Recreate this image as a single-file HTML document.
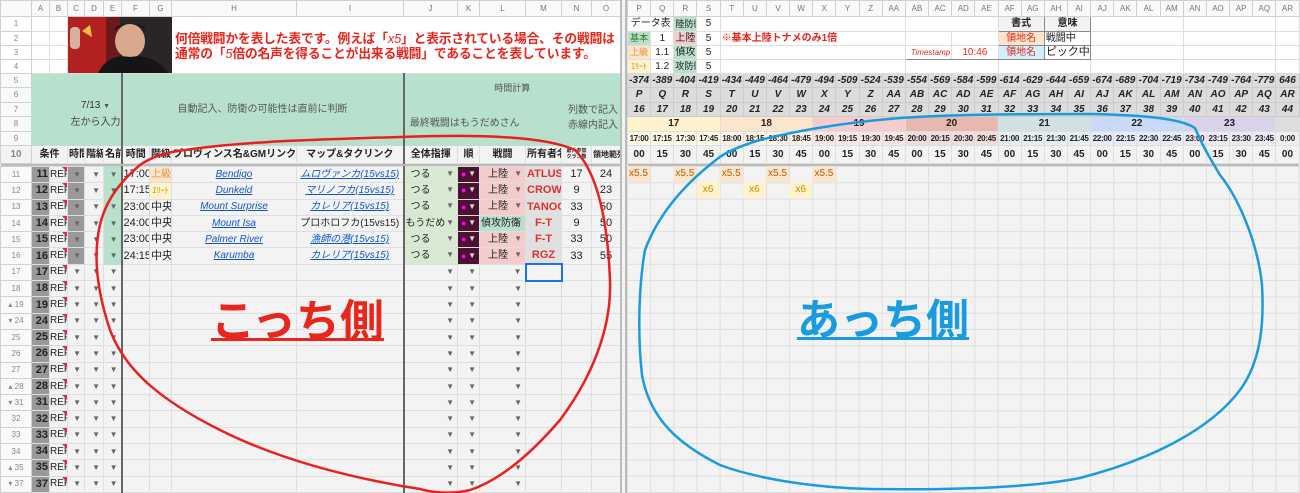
<!DOCTYPE html>
<html><head><meta charset="utf-8">
<style>
*{box-sizing:border-box;margin:0;padding:0}
body{width:1300px;height:493px;overflow:hidden;background:#f3f3f3;position:relative;font-family:"Liberation Sans","Noto Sans CJK JP",sans-serif;}
table{border-collapse:collapse;table-layout:fixed;position:absolute;top:0}
td{border:1px solid #dedede;font-size:10px;white-space:nowrap;overflow:hidden;text-align:center;padding:0 1px;line-height:1;color:#222}
.h td{background:#f8f9fa;color:#777;font-size:8px;border-color:#d0d0d0}
td.rh{background:#f8f9fa;color:#888;font-size:8px;border-color:#d0d0d0}
.w td{background:#fff}
.g{background:#b7e1cd!important;border-color:#b7e1cd}
.dk{background:#999!important;font-weight:bold;font-size:11px;text-align:right}
.ref{font-size:10px;text-align:left;position:relative;padding:0}
.ref:after{content:"";position:absolute;right:0;top:0;border-top:5px solid #e24;border-left:5px solid transparent}
.ar{color:#666;font-size:8px;text-align:right;padding-right:3px}
.tl{border-left:2px solid #666!important}
.lk{color:#1155cc;text-decoration:underline;font-style:italic;font-size:10px}
.j{background:#d9ead3!important;text-align:left;padding-left:6px;position:relative}
.j b,.l b{position:absolute;right:3px;color:#666;font-size:8px;font-weight:normal}
.k{background:#4c1130!important;text-align:left;color:#f0f;position:relative;font-size:9px;padding-left:3px}
.k b{position:absolute;right:3px;color:#ddd;font-size:8px;font-weight:normal}
.l{background:#f4cccc!important;position:relative;text-align:left;padding-left:8px}
.m{background:#e0e0e0!important;color:#e03030;font-weight:bold;font-size:11px}
.ro{border-left:1px solid #e87070!important}
.gr td{background:#dcdcdc;font-weight:bold;font-style:italic;font-size:10px;border-color:#ccc}
.hd td{background:#f3f3f3;font-weight:bold;font-size:10px}
.tm td{font-size:8px;font-weight:bold;letter-spacing:-0.3px;padding:0}
</style></head><body>

<table style="left:0;width:620px">
<colgroup><col style="width:31px"><col style="width:18px"><col style="width:18px"><col style="width:17px"><col style="width:19px"><col style="width:18px"><col style="width:28px"><col style="width:22px"><col style="width:125px"><col style="width:107px"><col style="width:54px"><col style="width:22px"><col style="width:46px"><col style="width:36px"><col style="width:30px"><col style="width:29px"></colgroup>
<tr class="h" style="height:16px"><td></td><td>A</td><td>B</td><td>C</td><td>D</td><td>E</td><td>F</td><td>G</td><td>H</td><td>I</td><td>J</td><td>K</td><td>L</td><td>M</td><td>N</td><td>O</td></tr>
<tr class="w" style="height:15px"><td class="rh">1</td><td></td><td></td><td colspan="5" rowspan="4" style="background:#222;padding:0"></td><td colspan="8" rowspan="4"></td></tr>
<tr class="w" style="height:14px"><td class="rh">2</td><td></td><td></td></tr>
<tr class="w" style="height:14px"><td class="rh">3</td><td></td><td></td></tr>
<tr class="w" style="height:14px"><td class="rh">4</td><td></td><td></td></tr>
<tr style="height:14px"><td class="rh">5</td><td class="g" colspan="2" rowspan="5"></td><td class="g" colspan="3" rowspan="5" style="position:relative"><div style="position:absolute;top:27px;left:0;width:55px;text-align:center;font-size:10px;color:#333">7/13 <span style="font-size:7px;color:#555">&#9660;</span></div><div style="position:absolute;top:44px;left:0;width:55px;text-align:center;font-size:10px;color:#444">左から入力</div></td><td class="g tl" colspan="4" rowspan="5" style="color:#555;font-size:10px">自動記入、防衛の可能性は直前に判断</td><td class="g tl" colspan="6" rowspan="2" style="color:#555;font-size:9px">時間計算</td></tr>
<tr style="height:15px"><td class="rh">6</td></tr>
<tr style="height:14px"><td class="rh">7</td><td class="g" colspan="3" rowspan="3" style="color:#555;font-size:10px;border-left:2px solid #666">最終戦闘はもうだめさん</td><td class="g" colspan="3" rowspan="3" style="position:relative;color:#555"><div style="position:absolute;top:3px;right:2px;font-size:10px">列数で記入</div><div style="position:absolute;top:18px;right:2px;font-size:10px">赤線内記入</div></td></tr>
<tr style="height:15px"><td class="rh">8</td></tr>
<tr style="height:14px"><td class="rh">9</td></tr>
<tr class="hd" style="height:18px"><td class="rh">10</td><td colspan="2" style="font-size:10px">条件</td><td>時間</td><td>階級</td><td>名前</td><td class="tl">時間</td><td>階級</td><td>プロヴィンス名&amp;GMリンク</td><td>マップ&amp;タクリンク</td><td class="tl">全体指揮</td><td>順</td><td>戦闘</td><td>所有者名</td><td style="font-size:5px;line-height:1.1">最大参加<br>クラン数</td><td style="font-size:8px">領地範列</td></tr>
<tr style="height:3px"><td colspan="16" style="background:#bbb;border:none;padding:0"></td></tr>
</table>

<div style="position:absolute;left:0;top:166px;width:620px">
<table style="position:static;width:620px">
<colgroup><col style="width:31px"><col style="width:18px"><col style="width:18px"><col style="width:17px"><col style="width:19px"><col style="width:18px"><col style="width:28px"><col style="width:22px"><col style="width:125px"><col style="width:107px"><col style="width:54px"><col style="width:22px"><col style="width:46px"><col style="width:36px"><col style="width:30px"><col style="width:29px"></colgroup>
<tr style="height:16.3px"><td class="rh">11</td><td class="dk">11</td><td class="ref">REF</td><td class="ar" style="background:#999">&#9660;</td><td class="ar">&#9660;</td><td class="ar g">&#9660;</td><td class="tl" style="font-size:11px">17:00</td><td style="background:#fce5cd;color:#e69138">上級</td><td><span class="lk">Bendigo</span></td><td><span class="lk">ムロヴァンカ(15vs15)</span></td><td class="j tl">つる<b>&#9660;</b></td><td class="k">●<b>&#9660;</b></td><td class="l">上陸<b>&#9660;</b></td><td class="m">ATLUS</td><td style="font-size:11px">17</td><td class="ro" style="font-size:11px">24</td></tr>
<tr style="height:16.3px"><td class="rh">12</td><td class="dk">12</td><td class="ref">REF</td><td class="ar" style="background:#999">&#9660;</td><td class="ar">&#9660;</td><td class="ar g">&#9660;</td><td class="tl" style="font-size:11px">17:15</td><td style="background:#fff2cc;color:#bf9000;font-size:8px">ｴﾘｰﾄ</td><td><span class="lk">Dunkeld</span></td><td><span class="lk">マリノフカ(15vs15)</span></td><td class="j tl">つる<b>&#9660;</b></td><td class="k">●<b>&#9660;</b></td><td class="l">上陸<b>&#9660;</b></td><td class="m">CROWN</td><td style="font-size:11px">9</td><td class="ro" style="font-size:11px">23</td></tr>
<tr style="height:16.3px"><td class="rh">13</td><td class="dk">13</td><td class="ref">REF</td><td class="ar" style="background:#999">&#9660;</td><td class="ar">&#9660;</td><td class="ar g">&#9660;</td><td class="tl" style="font-size:11px">23:00</td><td style="font-size:11px">中央</td><td><span class="lk">Mount Surprise</span></td><td><span class="lk">カレリア(15vs15)</span></td><td class="j tl">つる<b>&#9660;</b></td><td class="k">●<b>&#9660;</b></td><td class="l">上陸<b>&#9660;</b></td><td class="m">TANOC</td><td style="font-size:11px">33</td><td class="ro" style="font-size:11px">50</td></tr>
<tr style="height:16.3px"><td class="rh">14</td><td class="dk">14</td><td class="ref">REF</td><td class="ar" style="background:#999">&#9660;</td><td class="ar">&#9660;</td><td class="ar g">&#9660;</td><td class="tl" style="font-size:11px">24:00</td><td style="font-size:11px">中央</td><td><span class="lk">Mount Isa</span></td><td style="font-size:10px">プロホロフカ(15vs15)</td><td class="j tl" style="padding-left:1px">もうだめ<b>&#9660;</b></td><td class="k">●<b>&#9660;</b></td><td class="l" style="background:#b7e1cd!important;padding-left:1px">偵攻防衛<b>&#9660;</b></td><td class="m">F-T</td><td style="font-size:11px">9</td><td class="ro" style="font-size:11px">50</td></tr>
<tr style="height:16.3px"><td class="rh">15</td><td class="dk">15</td><td class="ref">REF</td><td class="ar" style="background:#999">&#9660;</td><td class="ar">&#9660;</td><td class="ar g">&#9660;</td><td class="tl" style="font-size:11px">23:00</td><td style="font-size:11px">中央</td><td><span class="lk">Palmer River</span></td><td><span class="lk">漁師の港(15vs15)</span></td><td class="j tl">つる<b>&#9660;</b></td><td class="k">●<b>&#9660;</b></td><td class="l">上陸<b>&#9660;</b></td><td class="m">F-T</td><td style="font-size:11px">33</td><td class="ro" style="font-size:11px">50</td></tr>
<tr style="height:16.3px"><td class="rh">16</td><td class="dk">16</td><td class="ref">REF</td><td class="ar" style="background:#999">&#9660;</td><td class="ar">&#9660;</td><td class="ar g">&#9660;</td><td class="tl" style="font-size:11px">24:15</td><td style="font-size:11px">中央</td><td><span class="lk">Karumba</span></td><td><span class="lk">カレリア(15vs15)</span></td><td class="j tl">つる<b>&#9660;</b></td><td class="k">●<b>&#9660;</b></td><td class="l">上陸<b>&#9660;</b></td><td class="m">RGZ</td><td style="font-size:11px">33</td><td class="ro" style="font-size:11px">55</td></tr>
<tr style="height:16.3px"><td class="rh">17</td><td class="dk">17</td><td class="ref">REF</td><td class="ar">&#9660;</td><td class="ar">&#9660;</td><td class="ar">&#9660;</td><td class="tl"></td><td></td><td></td><td></td><td class="ar tl">&#9660;</td><td class="ar">&#9660;</td><td class="ar">&#9660;</td><td style="border:2px solid #1a73e8"></td><td></td><td class="ro"></td></tr>
<tr style="height:16.3px"><td class="rh">18</td><td class="dk">18</td><td class="ref">REF</td><td class="ar">&#9660;</td><td class="ar">&#9660;</td><td class="ar">&#9660;</td><td class="tl"></td><td></td><td></td><td></td><td class="ar tl">&#9660;</td><td class="ar">&#9660;</td><td class="ar">&#9660;</td><td></td><td></td><td class="ro"></td></tr>
<tr style="height:16.3px"><td class="rh">&#9652; 19</td><td class="dk">19</td><td class="ref">REF</td><td class="ar">&#9660;</td><td class="ar">&#9660;</td><td class="ar">&#9660;</td><td class="tl"></td><td></td><td></td><td></td><td class="ar tl">&#9660;</td><td class="ar">&#9660;</td><td class="ar">&#9660;</td><td></td><td></td><td class="ro"></td></tr>
<tr style="height:16.3px"><td class="rh">&#9662; 24</td><td class="dk">24</td><td class="ref">REF</td><td class="ar">&#9660;</td><td class="ar">&#9660;</td><td class="ar">&#9660;</td><td class="tl"></td><td></td><td></td><td></td><td class="ar tl">&#9660;</td><td class="ar">&#9660;</td><td class="ar">&#9660;</td><td></td><td></td><td class="ro"></td></tr>
<tr style="height:16.3px"><td class="rh">25</td><td class="dk">25</td><td class="ref">REF</td><td class="ar">&#9660;</td><td class="ar">&#9660;</td><td class="ar">&#9660;</td><td class="tl"></td><td></td><td></td><td></td><td class="ar tl">&#9660;</td><td class="ar">&#9660;</td><td class="ar">&#9660;</td><td></td><td></td><td class="ro"></td></tr>
<tr style="height:16.3px"><td class="rh">26</td><td class="dk">26</td><td class="ref">REF</td><td class="ar">&#9660;</td><td class="ar">&#9660;</td><td class="ar">&#9660;</td><td class="tl"></td><td></td><td></td><td></td><td class="ar tl">&#9660;</td><td class="ar">&#9660;</td><td class="ar">&#9660;</td><td></td><td></td><td class="ro"></td></tr>
<tr style="height:16.3px"><td class="rh">27</td><td class="dk">27</td><td class="ref">REF</td><td class="ar">&#9660;</td><td class="ar">&#9660;</td><td class="ar">&#9660;</td><td class="tl"></td><td></td><td></td><td></td><td class="ar tl">&#9660;</td><td class="ar">&#9660;</td><td class="ar">&#9660;</td><td></td><td></td><td class="ro"></td></tr>
<tr style="height:16.3px"><td class="rh">&#9652; 28</td><td class="dk">28</td><td class="ref">REF</td><td class="ar">&#9660;</td><td class="ar">&#9660;</td><td class="ar">&#9660;</td><td class="tl"></td><td></td><td></td><td></td><td class="ar tl">&#9660;</td><td class="ar">&#9660;</td><td class="ar">&#9660;</td><td></td><td></td><td class="ro"></td></tr>
<tr style="height:16.3px"><td class="rh">&#9662; 31</td><td class="dk">31</td><td class="ref">REF</td><td class="ar">&#9660;</td><td class="ar">&#9660;</td><td class="ar">&#9660;</td><td class="tl"></td><td></td><td></td><td></td><td class="ar tl">&#9660;</td><td class="ar">&#9660;</td><td class="ar">&#9660;</td><td></td><td></td><td class="ro"></td></tr>
<tr style="height:16.3px"><td class="rh">32</td><td class="dk">32</td><td class="ref">REF</td><td class="ar">&#9660;</td><td class="ar">&#9660;</td><td class="ar">&#9660;</td><td class="tl"></td><td></td><td></td><td></td><td class="ar tl">&#9660;</td><td class="ar">&#9660;</td><td class="ar">&#9660;</td><td></td><td></td><td class="ro"></td></tr>
<tr style="height:16.3px"><td class="rh">33</td><td class="dk">33</td><td class="ref">REF</td><td class="ar">&#9660;</td><td class="ar">&#9660;</td><td class="ar">&#9660;</td><td class="tl"></td><td></td><td></td><td></td><td class="ar tl">&#9660;</td><td class="ar">&#9660;</td><td class="ar">&#9660;</td><td></td><td></td><td class="ro"></td></tr>
<tr style="height:16.3px"><td class="rh">34</td><td class="dk">34</td><td class="ref">REF</td><td class="ar">&#9660;</td><td class="ar">&#9660;</td><td class="ar">&#9660;</td><td class="tl"></td><td></td><td></td><td></td><td class="ar tl">&#9660;</td><td class="ar">&#9660;</td><td class="ar">&#9660;</td><td></td><td></td><td class="ro"></td></tr>
<tr style="height:16.3px"><td class="rh">&#9652; 35</td><td class="dk">35</td><td class="ref">REF</td><td class="ar">&#9660;</td><td class="ar">&#9660;</td><td class="ar">&#9660;</td><td class="tl"></td><td></td><td></td><td></td><td class="ar tl">&#9660;</td><td class="ar">&#9660;</td><td class="ar">&#9660;</td><td></td><td></td><td class="ro"></td></tr>
<tr style="height:16.3px"><td class="rh">&#9662; 37</td><td class="dk">37</td><td class="ref">REF</td><td class="ar">&#9660;</td><td class="ar">&#9660;</td><td class="ar">&#9660;</td><td class="tl"></td><td></td><td></td><td></td><td class="ar tl">&#9660;</td><td class="ar">&#9660;</td><td class="ar">&#9660;</td><td></td><td></td><td class="ro"></td></tr>
</table></div>

<div style="position:absolute;left:620px;top:0;width:7px;height:493px;background:#f3f3f3;border-left:2px solid #bbb;border-right:2px solid #bbb"></div>

<table style="left:627px;width:672px">
<colgroup><col span="29" style="width:23.17px"></colgroup>
<tr class="h" style="height:16px"><td>P</td><td>Q</td><td>R</td><td>S</td><td>T</td><td>U</td><td>V</td><td>W</td><td>X</td><td>Y</td><td>Z</td><td>AA</td><td>AB</td><td>AC</td><td>AD</td><td>AE</td><td>AF</td><td>AG</td><td>AH</td><td>AI</td><td>AJ</td><td>AK</td><td>AL</td><td>AM</td><td>AN</td><td>AO</td><td>AP</td><td>AQ</td><td>AR</td></tr>
<tr class="w" style="height:15px"><td colspan="2" style="font-size:10px">データ表</td><td style="background:#b7e1cd;font-size:9px">陸防衛</td><td style="font-size:10px">5</td><td colspan="8"></td><td colspan="4"></td><td colspan="2" style="background:#f3f3f3;font-weight:bold;border:1px solid #888">書式</td><td colspan="2" style="background:#f3f3f3;font-weight:bold;border:1px solid #888">意味</td><td colspan="4"></td><td colspan="4"></td><td></td></tr>
<tr class="w" style="height:14px"><td style="background:#b7e1cd;color:#38761d;font-size:9px">基本</td><td style="font-size:10px">1</td><td style="background:#f4cccc">上陸</td><td>5</td><td colspan="8" style="color:#e8261d;font-weight:bold;text-align:left;font-size:10px">※基本上陸トナメのみ1倍</td><td colspan="2" style="border-top:1px solid #888;border-left:1px solid #888"></td><td colspan="2" style="border-top:1px solid #888"></td><td colspan="2" style="background:#fce5cd;color:#e8261d;border:1px solid #888">領地名</td><td colspan="2" style="border:1px solid #888;text-align:left">戦闘中</td><td colspan="4"></td><td colspan="4"></td><td></td></tr>
<tr class="w" style="height:14px"><td style="background:#fce5cd;color:#e69138;font-size:9px">上級</td><td style="font-size:10px">1.1</td><td style="background:#b7e1cd">偵攻</td><td>5</td><td colspan="8"></td><td colspan="2" style="color:#e8261d;font-style:italic;font-size:8px;text-align:right;border-left:1px solid #888;border-bottom:1px solid #888">Timestamp</td><td colspan="2" style="color:#e8261d;font-size:10px;border-bottom:1px solid #888">10:46</td><td colspan="2" style="background:#d0f0fb;color:#e8261d;border:1px solid #888">領地名</td><td colspan="2" style="border:1px solid #888;text-align:left;font-size:11px">ピック中</td><td colspan="4"></td><td colspan="4"></td><td></td></tr>
<tr class="w" style="height:14px"><td style="background:#fff2cc;color:#bf9000;font-size:8px">ｴﾘｰﾄ</td><td style="font-size:10px">1.2</td><td style="background:#b7e1cd;font-size:9px">攻防衛</td><td>5</td><td colspan="8"></td><td colspan="4"></td><td colspan="4"></td><td colspan="4"></td><td colspan="4"></td><td></td></tr>
<tr class="gr" style="height:14px"><td>-374</td><td>-389</td><td>-404</td><td>-419</td><td>-434</td><td>-449</td><td>-464</td><td>-479</td><td>-494</td><td>-509</td><td>-524</td><td>-539</td><td>-554</td><td>-569</td><td>-584</td><td>-599</td><td>-614</td><td>-629</td><td>-644</td><td>-659</td><td>-674</td><td>-689</td><td>-704</td><td>-719</td><td>-734</td><td>-749</td><td>-764</td><td>-779</td><td>646</td></tr>
<tr class="gr" style="height:15px"><td>P</td><td>Q</td><td>R</td><td>S</td><td>T</td><td>U</td><td>V</td><td>W</td><td>X</td><td>Y</td><td>Z</td><td>AA</td><td>AB</td><td>AC</td><td>AD</td><td>AE</td><td>AF</td><td>AG</td><td>AH</td><td>AI</td><td>AJ</td><td>AK</td><td>AL</td><td>AM</td><td>AN</td><td>AO</td><td>AP</td><td>AQ</td><td>AR</td></tr>
<tr class="gr" style="height:14px"><td>16</td><td>17</td><td>18</td><td>19</td><td>20</td><td>21</td><td>22</td><td>23</td><td>24</td><td>25</td><td>26</td><td>27</td><td>28</td><td>29</td><td>30</td><td>31</td><td>32</td><td>33</td><td>34</td><td>35</td><td>36</td><td>37</td><td>38</td><td>39</td><td>40</td><td>41</td><td>42</td><td>43</td><td>44</td></tr>
<tr style="height:15px"><td colspan="4" style="background:#fff2cc;font-weight:bold">17</td><td colspan="4" style="background:#fce5cd;font-weight:bold">18</td><td colspan="4" style="background:#f4cccc;font-weight:bold">19</td><td colspan="4" style="background:#e6b8af;font-weight:bold">20</td><td colspan="4" style="background:#d0e0e3;font-weight:bold">21</td><td colspan="4" style="background:#c9daf8;font-weight:bold">22</td><td colspan="4" style="background:#d9d2e9;font-weight:bold">23</td><td style="background:#ddd"></td></tr>
<tr class="tm" style="height:14px"><td style="background:#fffae6">17:00</td><td style="background:#fffae6">17:15</td><td style="background:#fffae6">17:30</td><td style="background:#fffae6">17:45</td><td style="background:#fef2e6">18:00</td><td style="background:#fef2e6">18:15</td><td style="background:#fef2e6">18:30</td><td style="background:#fef2e6">18:45</td><td style="background:#fae6e6">19:00</td><td style="background:#fae6e6">19:15</td><td style="background:#fae6e6">19:30</td><td style="background:#fae6e6">19:45</td><td style="background:#f0dcd8">20:00</td><td style="background:#f0dcd8">20:15</td><td style="background:#f0dcd8">20:30</td><td style="background:#f0dcd8">20:45</td><td style="background:#e6eef0">21:00</td><td style="background:#e6eef0">21:15</td><td style="background:#e6eef0">21:30</td><td style="background:#e6eef0">21:45</td><td style="background:#e4ecfb">22:00</td><td style="background:#e4ecfb">22:15</td><td style="background:#e4ecfb">22:30</td><td style="background:#e4ecfb">22:45</td><td style="background:#ece8f4">23:00</td><td style="background:#ece8f4">23:15</td><td style="background:#ece8f4">23:30</td><td style="background:#ece8f4">23:45</td><td style="background:#eee">0:00</td></tr>
<tr class="hd" style="height:18px"><td>00</td><td>15</td><td>30</td><td>45</td><td>00</td><td>15</td><td>30</td><td>45</td><td>00</td><td>15</td><td>30</td><td>45</td><td>00</td><td>15</td><td>30</td><td>45</td><td>00</td><td>15</td><td>30</td><td>45</td><td>00</td><td>15</td><td>30</td><td>45</td><td>00</td><td>15</td><td>30</td><td>45</td><td>00</td></tr>
<tr style="height:3px"><td colspan="29" style="background:#bbb;border:none;padding:0"></td></tr>
</table>

<div style="position:absolute;left:627px;top:166px;width:673px;height:327px;background-color:#f3f3f3;background-image:linear-gradient(to right,#dedede 1px,transparent 1px),linear-gradient(to bottom,#dedede 1px,transparent 1px);background-size:23.17px 16.3px"></div>
<div style="position:absolute;top:166px;left:627px;font-size:10px;color:#b45f06">
<div style="position:absolute;left:0;top:0;width:23px;height:16px;background:#fce5cd;line-height:16px;text-align:center">x5.5</div>
<div style="position:absolute;left:46.3px;top:0;width:23px;height:16px;background:#fce5cd;line-height:16px;text-align:center">x5.5</div>
<div style="position:absolute;left:92.7px;top:0;width:23px;height:16px;background:#fce5cd;line-height:16px;text-align:center">x5.5</div>
<div style="position:absolute;left:139px;top:0;width:23px;height:16px;background:#fce5cd;line-height:16px;text-align:center">x5.5</div>
<div style="position:absolute;left:185.4px;top:0;width:23px;height:16px;background:#fce5cd;line-height:16px;text-align:center">x5.5</div>
<div style="position:absolute;left:69.5px;top:16.3px;width:23px;height:16px;background:#fff2cc;color:#bf9000;line-height:16px;text-align:center">x6</div>
<div style="position:absolute;left:115.9px;top:16.3px;width:23px;height:16px;background:#fff2cc;color:#bf9000;line-height:16px;text-align:center">x6</div>
<div style="position:absolute;left:162.2px;top:16.3px;width:23px;height:16px;background:#fff2cc;color:#bf9000;line-height:16px;text-align:center">x6</div>
</div>

<svg style="position:absolute;left:68px;top:17px" width="104" height="56" viewBox="0 0 104 56">
<rect width="104" height="56" fill="#2a2526"/>
<rect width="38" height="56" fill="#b32020"/>
<rect x="38" width="14" height="56" fill="#6a1a1a"/>
<path d="M14 14 l8 -6 l2 12 z" fill="#e8c040"/>
<ellipse cx="62" cy="24" rx="15" ry="17" fill="#d9a98e"/>
<path d="M46 14 Q62 -2 78 14 L76 10 Q62 2 48 10Z" fill="#111"/>
<path d="M30 56 Q40 36 62 40 Q86 36 100 56Z" fill="#151515"/>
<rect x="2" y="10" width="10" height="22" rx="4" fill="#d9b0a0"/>
</svg>

<div style="position:absolute;left:175px;top:31px;color:#e8261d;font-weight:bold;font-size:12.8px;line-height:15px;white-space:nowrap;letter-spacing:-0.2px">何倍戦闘かを表した表です。例えば「<i style="font-weight:normal">x5</i>」と表示されている場合、その戦闘は<br>通常の「<i style="font-weight:normal">5</i>倍の名声を得ることが出来る戦闘」であることを表しています。</div>

<div style="position:absolute;left:211px;top:299px;color:#e8261d;font-weight:bold;font-size:44px;line-height:46px;text-decoration:underline;text-decoration-thickness:3px;white-space:nowrap">こっち側</div>
<div style="position:absolute;left:797px;top:298px;color:#1a9be0;font-weight:bold;font-size:43px;line-height:46px;text-decoration:underline;text-decoration-thickness:3px;white-space:nowrap">あっち側</div>

<svg style="position:absolute;left:0;top:0" width="1300" height="493" viewBox="0 0 1300 493">
<path d="M172 152 C230 142 300 140 400 137 C460 135 540 134 575 150 C600 175 608 230 610 280 C612 330 590 380 560 420 C530 455 500 480 470 490 C450 495 430 492 420 489 C350 478 280 460 220 430 C160 400 125 370 110 330 C100 300 95 270 97 245 C99 215 110 190 140 165 C150 158 162 154 172 152" fill="none" stroke="#e82020" stroke-width="2.5"/>
<path d="M716 160 C690 180 660 210 645 250 C638 290 638 340 642 375 C650 420 680 445 720 465 C760 480 820 488 870 489 C950 490 1030 488 1080 478 C1150 460 1210 430 1240 390 C1262 360 1264 320 1262 285 C1258 245 1240 200 1220 175 C1205 150 1200 140 1195 128 C1180 118 1140 115 1090 114 C1030 114 960 114 900 118 C850 122 800 130 760 140 C740 146 725 152 716 160" fill="none" stroke="#1a9be0" stroke-width="2.5"/>
</svg>
</body></html>
